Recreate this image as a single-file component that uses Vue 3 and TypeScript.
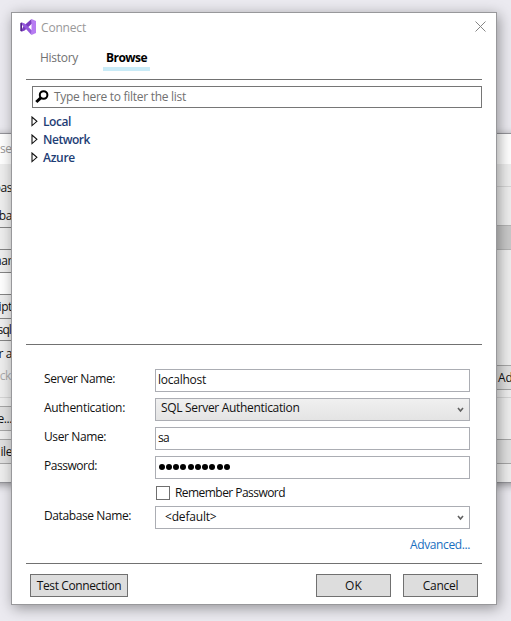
<script setup lang="ts">
import { ref } from 'vue'

interface BackRow { kind: string; text?: string; height: number }

const leftRows: BackRow[] = [
  { kind: 'label', text: 'bas', height: 47 },
  { kind: 'label low', text: 'ba', height: 16 },
  { kind: 'box', height: 23 },
  { kind: 'label', text: 'nar', height: 22 },
  { kind: 'box white', height: 23 },
  { kind: 'label', text: 'ipt', height: 23 },
  { kind: 'box tight', text: 'sql', height: 23 },
  { kind: 'label', text: 'r a', height: 25 },
  { kind: 'label dim', text: 'ck', height: 19 },
  { kind: 'gap', height: 12 },
  { kind: 'rule', height: 9 },
  { kind: 'button', text: 'e...', height: 25 },
  { kind: 'gap', height: 8 },
  { kind: 'button', text: 'ile', height: 25 },
  { kind: 'gap', height: 18 },
]
const rightRows: BackRow[] = [
  { kind: 'gap', height: 22 },
  { kind: 'rule', height: 39 },
  { kind: 'bar', height: 25 },
  { kind: 'gap', height: 115 },
  { kind: 'button', text: 'Ad', height: 25 },
  { kind: 'gap', height: 7 },
  { kind: 'rule', height: 42 },
  { kind: 'button', height: 25 },
  { kind: 'gap', height: 18 },
]

const nodes = [
  { name: 'Local', width: 28 },
  { name: 'Network', width: 47 },
  { name: 'Azure', width: 32 },
]
const tab = ref('Browse')
const filter = ref('')
const remember = ref(false)

// Tracks a caption so that it fills the given advance width.
const vFit = {
  mounted(el: HTMLElement, binding: { value: number }) {
    const natural = el.getBoundingClientRect().width
    const count = (el.textContent ?? '').length
    if (count > 0) el.style.letterSpacing = `${(binding.value - natural) / count}px`
  },
}
</script>

<template>
  <main class="desktop">
    <section class="back">
      <header class="back-title"><span>se</span></header>
      <div class="back-body">
        <div class="col left">
          <div v-for="(r, i) in leftRows" :key="i" :class="['row', r.kind]" :style="{ height: r.height + 'px' }"><span>{{ r.text }}</span></div>
        </div>
        <div class="col right">
          <div v-for="(r, i) in rightRows" :key="i" :class="['row', r.kind]" :style="{ height: r.height + 'px' }"><span>{{ r.text }}</span></div>
        </div>
      </div>
    </section>

    <section class="dialog">
      <header class="title">
        <svg class="logo" width="16" height="16" viewBox="0 0 16 16">
          <path fill="#52218a" d="M.3 4.1 1.8 3.4 5 6 3.7 7.1 2 5.7v4.6l1.7-1.4L5 10l-3.2 2.6-1.5-.7z" />
          <path fill="#7a3cc0" d="M3.5 7 11.5 0 12 4.6 4.6 11.4 1.8 12.6 2 10.3z" />
          <path fill="#9458dc" d="m1.8 3.4 2.8 1.2L12 11.4 11.5 16 2 5.7z" />
          <path fill="#b77cf2" d="M11.5 0 16 2v12l-4.5 2z" />
        </svg>
        <span v-fit="45" class="caption">Connect</span>
        <svg class="close" width="11" height="11" viewBox="0 0 11 11"><path d="m.5.5 10 10m0-10-10 10" fill="none" stroke="#858585" /></svg>
      </header>

      <nav class="tabs">
        <button :class="{ on: tab === 'History' }" @click="tab = 'History'"><span v-fit="38">History</span></button>
        <button :class="{ on: tab === 'Browse' }" @click="tab = 'Browse'"><span v-fit="41">Browse</span></button>
      </nav>

      <div class="browse">
        <label class="search">
          <svg width="14" height="14" viewBox="0 0 14 14"><circle cx="8.6" cy="5" r="3.8" fill="none" stroke="#000" stroke-width="2" /><path d="M5.8 7.8 1.3 12" stroke="#000" stroke-width="3" /></svg>
          <span v-if="!filter" v-fit="132">Type here to filter the list</span>
        </label>
        <ul class="tree">
          <li v-for="n in nodes" :key="n.name">
            <svg width="7" height="11" viewBox="0 0 7 11"><path d="M1 1v8.6L5.9 5.3z" fill="#fff" stroke="#111" stroke-width="1.1" /></svg>
            <span v-fit="n.width">{{ n.name }}</span>
          </li>
        </ul>
      </div>

      <div class="form">
        <span class="label"><span v-fit="71">Server Name:</span></span>
        <div class="field"><span v-fit="48">localhost</span></div>
        <span class="label"><span v-fit="81">Authentication:</span></span>
        <div class="field select grey"><span v-fit="138.5">SQL Server Authentication</span><svg class="chev" width="7" height="6" viewBox="0 0 7 6"><path d="m1 1 2.5 3L6 1" fill="none" stroke="#606060" stroke-width="1.6" /></svg></div>
        <span class="label"><span v-fit="62">User Name:</span></span>
        <div class="field"><span v-fit="11">sa</span></div>
        <span class="label"><span v-fit="53">Password:</span></span>
        <div class="field dots"><i v-for="n in 10" :key="n" /></div>
        <label class="check" @click="remember = !remember"><i /><span v-fit="110">Remember Password</span></label>
        <span class="label"><span v-fit="87">Database Name:</span></span>
        <div class="field select plain"><span v-fit="51.5">&lt;default&gt;</span><svg class="chev" width="7" height="6" viewBox="0 0 7 6"><path d="m1 1 2.5 3L6 1" fill="none" stroke="#606060" stroke-width="1.6" /></svg></div>
        <a class="advanced"><span v-fit="60">Advanced...</span></a>
      </div>

      <footer class="actions">
        <button class="test"><span v-fit="84.5">Test Connection</span></button>
        <button><span v-fit="17">OK</span></button>
        <button><span v-fit="35.5">Cancel</span></button>
      </footer>
    </section>
  </main>
</template>

<style>
body { overflow: hidden; }
</style>

<style scoped>
* { box-sizing: border-box; }
.desktop { position: relative; width: 511px; height: 621px; overflow: hidden; background: #ebeaf0; font: 12px/16px "Open Sans", "Noto Sans", sans-serif; color: #111; }
span { white-space: nowrap; }
button { font: inherit; color: inherit; border: 0; padding: 0; background: none; }

.back { position: absolute; left: -8px; top: 133px; width: 540px; height: 350px; background: #eee; border: 1px solid #949499; box-shadow: 0 2px 8px rgba(0, 0, 0, .38); }
.back-title { height: 30px; background: #fff; padding: 7px 0 0 7px; color: #999; letter-spacing: -.5px; }
.back-body { display: flex; justify-content: space-between; }
.col.left { width: 19px; }
.col.right { width: 35px; }
.row { display: flex; align-items: center; }
.left .row { justify-content: flex-end; }
.left .label, .left .box, .left .button { letter-spacing: -.4px; }
.left .low { align-items: flex-end; padding-bottom: 3px; }
.left .dim { color: #aaa; padding-right: 1px; }
.box { border: solid #858585; border-width: 1px 0; }
.white { background: #fff; }
.left .tight { letter-spacing: -.9px; padding-right: 1px; }
.rule { border-top: 1px solid #d5d5d5; }
.bar { background: #c9c9c9; border: solid #b4b4b4; border-width: 1px 0; }
.button { background: #e1e1e1; border: 1px solid #a6a6a6; }
.right .button { padding-left: 1px; }
.left .button { border-left: 0; border-right: 0; }

.dialog { position: absolute; left: 11px; top: 12px; width: 486px; height: 593px; background: #fff; border: 1px solid #98989b; box-shadow: 2px 3px 13px rgba(0, 0, 0, .38); display: flex; flex-direction: column; }
.title { height: 30px; display: flex; align-items: center; padding: 0 9px 2px 8px; color: #999; }
.caption { margin-left: 5px; padding-top: 1px; }
.close { margin: -1px 1px 0 auto; }
.tabs { height: 36px; margin: 0 14px; display: flex; gap: 21px; padding: 6px 0 0 10px; }
.tabs button { height: 22px; padding: 1px 4px 5px; color: #717171; text-align: left; }
.tabs button.on { color: #000; font-weight: 700; border-bottom: 4px solid #c9ebf7; padding: 1px 3px; width: 47px; }
.browse { height: 266px; margin: 0 14px; border: solid #717171; border-width: 1px 0; padding: 6px 0 0 6px; }
.search { height: 22px; border: 1px solid #767676; display: flex; align-items: center; color: #717171; gap: 5px; padding-left: 2px; }
.tree { list-style: none; margin: 5px 0 0 -1px; padding: 0; color: #1e3e75; font-weight: 600; }
.tree li { height: 18px; display: flex; align-items: center; gap: 5px; }
.tree svg { margin-top: -2px; }
.form { flex: 1; margin: 0 26px 0 32px; padding-top: 24px; display: grid; grid-template-columns: 111px 315px; grid-template-rows: 29px 29px 29px 29px 21px 29px 20px; }
.form .label { padding-top: 2px; }
.field { height: 23px; border: 1px solid #abadb3; padding: 2px; }
.select { display: flex; }
.grey { padding: 1px 5px 0; background: linear-gradient(#f0f0f0, #e4e4e4); }
.plain { padding: 2px 5px 0 9px; }
.chev { margin: 7px 0 0 auto; }
.plain .chev { margin-top: 6px; }
.dots { display: flex; align-items: center; gap: 1.25px; padding: 0 0 1px 2.5px; }
.dots i { width: 6px; height: 6px; border-radius: 50%; background: #000; }
.check { grid-column: 2; display: flex; gap: 5px; padding-left: 1px; }
.check i { width: 14px; height: 14px; border: 1px solid #6f6f6f; margin-top: 1px; }
.advanced { grid-column: 2; justify-self: end; color: #1a6fc0; padding-top: 2px; }
.actions { height: 41px; margin: 0 14px; border-top: 1px solid #717171; padding: 10px 4px 0; display: flex; gap: 12px; }
.actions button { width: 75px; height: 23px; border: 1px solid #707070; background: #ddd; }
.actions .test { width: 98px; margin-right: auto; }
</style>
